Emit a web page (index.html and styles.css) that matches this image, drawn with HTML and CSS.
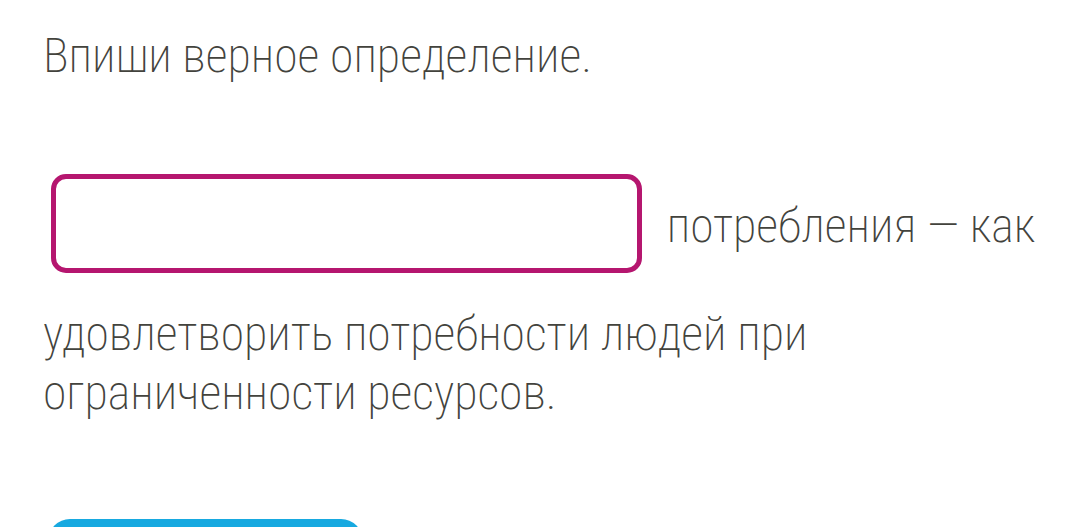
FILE: index.html
```html
<!DOCTYPE html>
<html lang="ru">
<head>
  <meta charset="UTF-8">
  <title>Задание</title>
  <link rel="stylesheet" href="styles.css">
</head>
<body>
  <div class="task">
    <p class="task-title">Впиши верное определение.</p>
    <p class="task-text"><span class="gap"></span> потребления — как удовлетворить потребности людей при ограниченности ресурсов.</p>
    <button class="check-btn" type="button"></button>
  </div>
</body>
</html>
```

FILE: styles.css
```css
* { margin: 0; padding: 0; box-sizing: border-box; }
body {
  background: #fff;
  font-family: "Roboto", "Noto Sans", sans-serif;
  font-stretch: 75%;
  font-weight: 200;
  color: #43433d;
  overflow: hidden;
}
.task {
  padding: 24px 0 0 43px;
  width: 1040px;
}
.task-title {
  font-size: 48px;
  line-height: 64px;
}
.task-text {
  margin-top: 86px;
  font-size: 48px;
  line-height: 59px;
}
.gap {
  display: inline-block;
  width: 591px;
  height: 99px;
  margin: 0 14px 31px 8px;
  border: 5px solid #b5166f;
  border-radius: 15px;
  vertical-align: -62px;
  background: #fff;
}
.check-btn {
  display: block;
  margin: 97px 0 0 5px;
  width: 315px;
  height: 60px;
  border: none;
  border-radius: 22px;
  background: #17a9e0;
}
```
